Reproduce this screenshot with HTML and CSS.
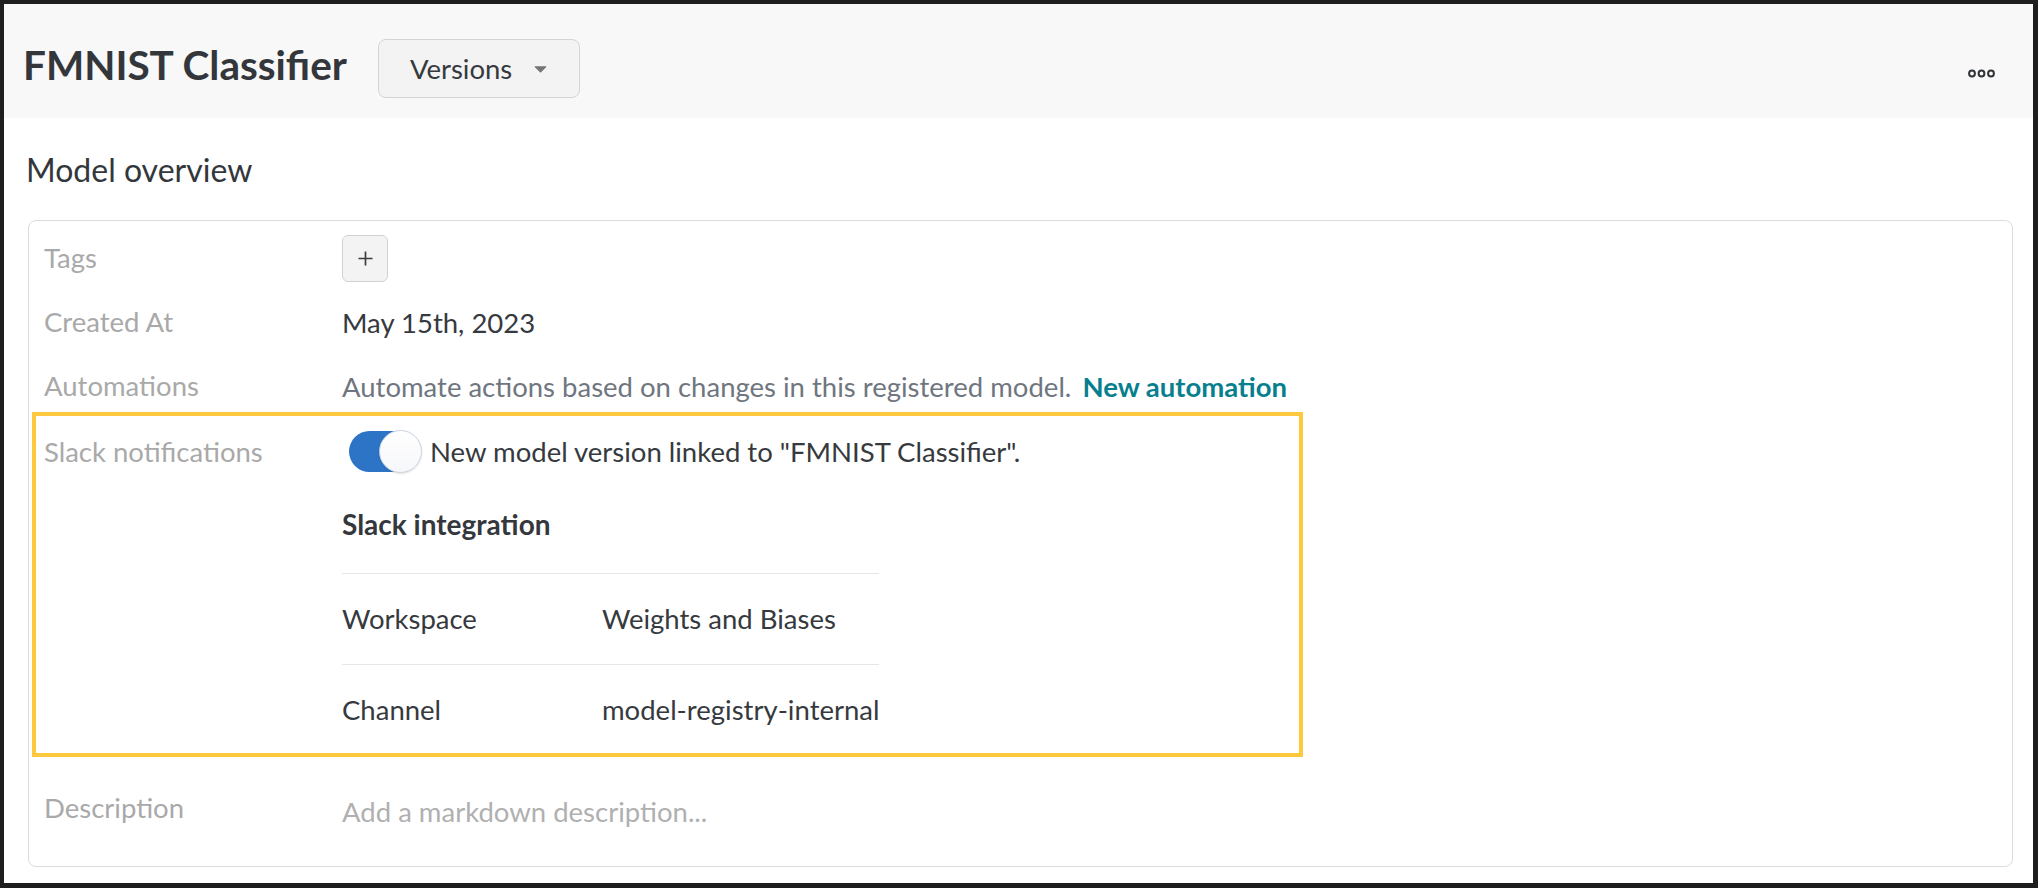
FILE: index.html
```html
<!DOCTYPE html>
<html>
<head>
<meta charset="utf-8">
<title>FMNIST Classifier</title>
<link rel="stylesheet" href="styles.css">
</head>
<body>
<div class="frame">
  <header class="header">
    <h1 class="title">FMNIST Classifier</h1>
    <button class="versions">
      <span>Versions</span>
      <svg class="caret" width="13" height="7" viewBox="0 0 13 7"><path d="M1 0.8 H12 L6.5 6.3 Z" fill="#767676" stroke="#767676" stroke-width="1" stroke-linejoin="round"/></svg>
    </button>
    <div class="spacer"></div>
    <svg class="dots" width="27" height="9" viewBox="0 0 27 9">
      <circle cx="4" cy="4.5" r="2.9" fill="none" stroke="#2f3337" stroke-width="2"/>
      <circle cx="13.5" cy="4.5" r="2.9" fill="none" stroke="#2f3337" stroke-width="2"/>
      <circle cx="23" cy="4.5" r="2.9" fill="none" stroke="#2f3337" stroke-width="2"/>
    </svg>
  </header>

  <main class="main">
    <h2 class="section-title">Model overview</h2>
    <div class="card">
      <div class="row">
        <div class="label">Tags</div>
        <div class="value">
          <button class="plus" aria-label="Add tag">
            <svg width="15" height="15" viewBox="0 0 15 15"><path d="M7.5 0.5 V14.5 M0.5 7.5 H14.5" stroke="#3a3d40" stroke-width="1.7"/></svg>
          </button>
        </div>
      </div>
      <div class="row">
        <div class="label">Created At</div>
        <div class="value">May 15th, 2023</div>
      </div>
      <div class="row">
        <div class="label">Automations</div>
        <div class="value"><span class="muted">Automate actions based on changes in this registered model.</span> <a class="link">New automation</a></div>
      </div>

      <div class="highlight">
        <div class="label slack-label">Slack notifications</div>
        <div class="slack-value">
          <div class="toggle-line">
            <div class="toggle"><div class="knob"></div></div>
            <span>New model version linked to "FMNIST Classifier".</span>
          </div>
          <div class="integration-title">Slack integration</div>
          <table class="integration">
            <tr><td class="k">Workspace</td><td>Weights and Biases</td></tr>
            <tr class="last"><td class="k">Channel</td><td>model-registry-internal</td></tr>
          </table>
        </div>
      </div>

      <div class="row desc-row">
        <div class="label">Description</div>
        <div class="value placeholder">Add a markdown description...</div>
      </div>
    </div>
  </main>
</div>
</body>
</html>
```
FILE: styles.css
```css
* { box-sizing: border-box; }
html, body { margin: 0; padding: 0; background: #fff; }
body {
  font-family: "Lato", "Liberation Sans", sans-serif;
  font-size: 27.5px;
  color: #363a3e;
}
.frame {
  width: 2038px;
  height: 888px;
  border-style: solid;
  border-color: #1e1e1e;
  border-width: 4px 5px 5px 4px;
  overflow: hidden;
}
.header {
  height: 114px;
  background: #f8f8f8;
  display: flex;
  align-items: flex-start;
  padding: 35px 38px 0 19px;
}
.title {
  margin: 2px 31px 0 0;
  font-size: 40.5px;
  line-height: 48px;
  font-weight: 700;
  color: #33373b;
}
.versions {
  height: 59px;
  width: 202px;
  display: flex;
  align-items: center;
  gap: 22px;
  padding: 0 0 0 31px;
  background: #f3f3f3;
  border: 1px solid #d4d4d4;
  border-radius: 8px;
  font-family: inherit;
  font-size: 27.5px;
  color: #363a3e;
}
.caret { display: block; margin-top: 1px; }
.spacer { flex: 1; }
.dots { display: block; margin-top: 30px; }

.main { padding: 0 20px 0 24px; }
.section-title {
  margin: 33px 0 31px -2px;
  font-size: 32px;
  line-height: 38px;
  font-weight: 400;
  color: #33373b;
}
.card {
  border: 1px solid #dcdcdc;
  border-radius: 8px;
  padding: 14px 15px 34px;
  display: flex;
  flex-direction: column;
  gap: 17px;
}
.row {
  display: grid;
  grid-template-columns: 298px 1fr;
  align-items: center;
  min-height: 47px;
}
.row > .label { margin-top: -3px; }
.label { color: #a9a9a9; }
.value { color: #363a3e; }
.plus {
  width: 46px;
  height: 47px;
  display: flex;
  align-items: center;
  justify-content: center;
  background: #f3f3f3;
  border: 1px solid #d2d2d2;
  border-radius: 6px;
  padding: 0;
}
.plus svg { display: block; }
.muted { color: #6f7680; }
.link { color: #087f8e; font-weight: 700; margin-left: 4px; }

.highlight {
  width: 1271px;
  margin: -15px 0 0 -12px;
  border: 4px solid #fec93e;
  padding: 12px 0 0 8px;
  display: grid;
  grid-template-columns: 298px 1fr;
  align-items: start;
}
.slack-label { line-height: 47px; }
.toggle-line {
  height: 47px;
  display: flex;
  align-items: center;
  gap: 9px;
  padding-left: 7px;
}
.toggle {
  width: 72px;
  height: 41px;
  border-radius: 21px;
  background: #2d74c7;
  display: flex;
  align-items: center;
  justify-content: flex-end;
  flex-shrink: 0;
}
.knob {
  width: 43px;
  height: 43px;
  margin-right: -1px;
  border-radius: 50%;
  background: linear-gradient(#ffffff, #f6f7f9);
  border: 1.5px solid #c8d3e0;
  box-shadow: 0 1px 2px rgba(0, 0, 0, 0.12);
  flex-shrink: 0;
}
.integration-title {
  margin-top: 31px;
  line-height: 36px;
  font-weight: 700;
  font-size: 28px;
  color: #34383c;
}
.integration {
  margin-top: 31px;
  border-collapse: collapse;
}
.integration td {
  border-top: 1px solid #e6e6e6;
  padding: 27px 0;
  line-height: 36px;
  white-space: nowrap;
}
.integration td.k { width: 260px; }
.integration tr.last td { padding-bottom: 25px; }

.desc-row { margin-top: 11px; }
.placeholder { color: #b0b0b0; padding-top: 5px; }
```
